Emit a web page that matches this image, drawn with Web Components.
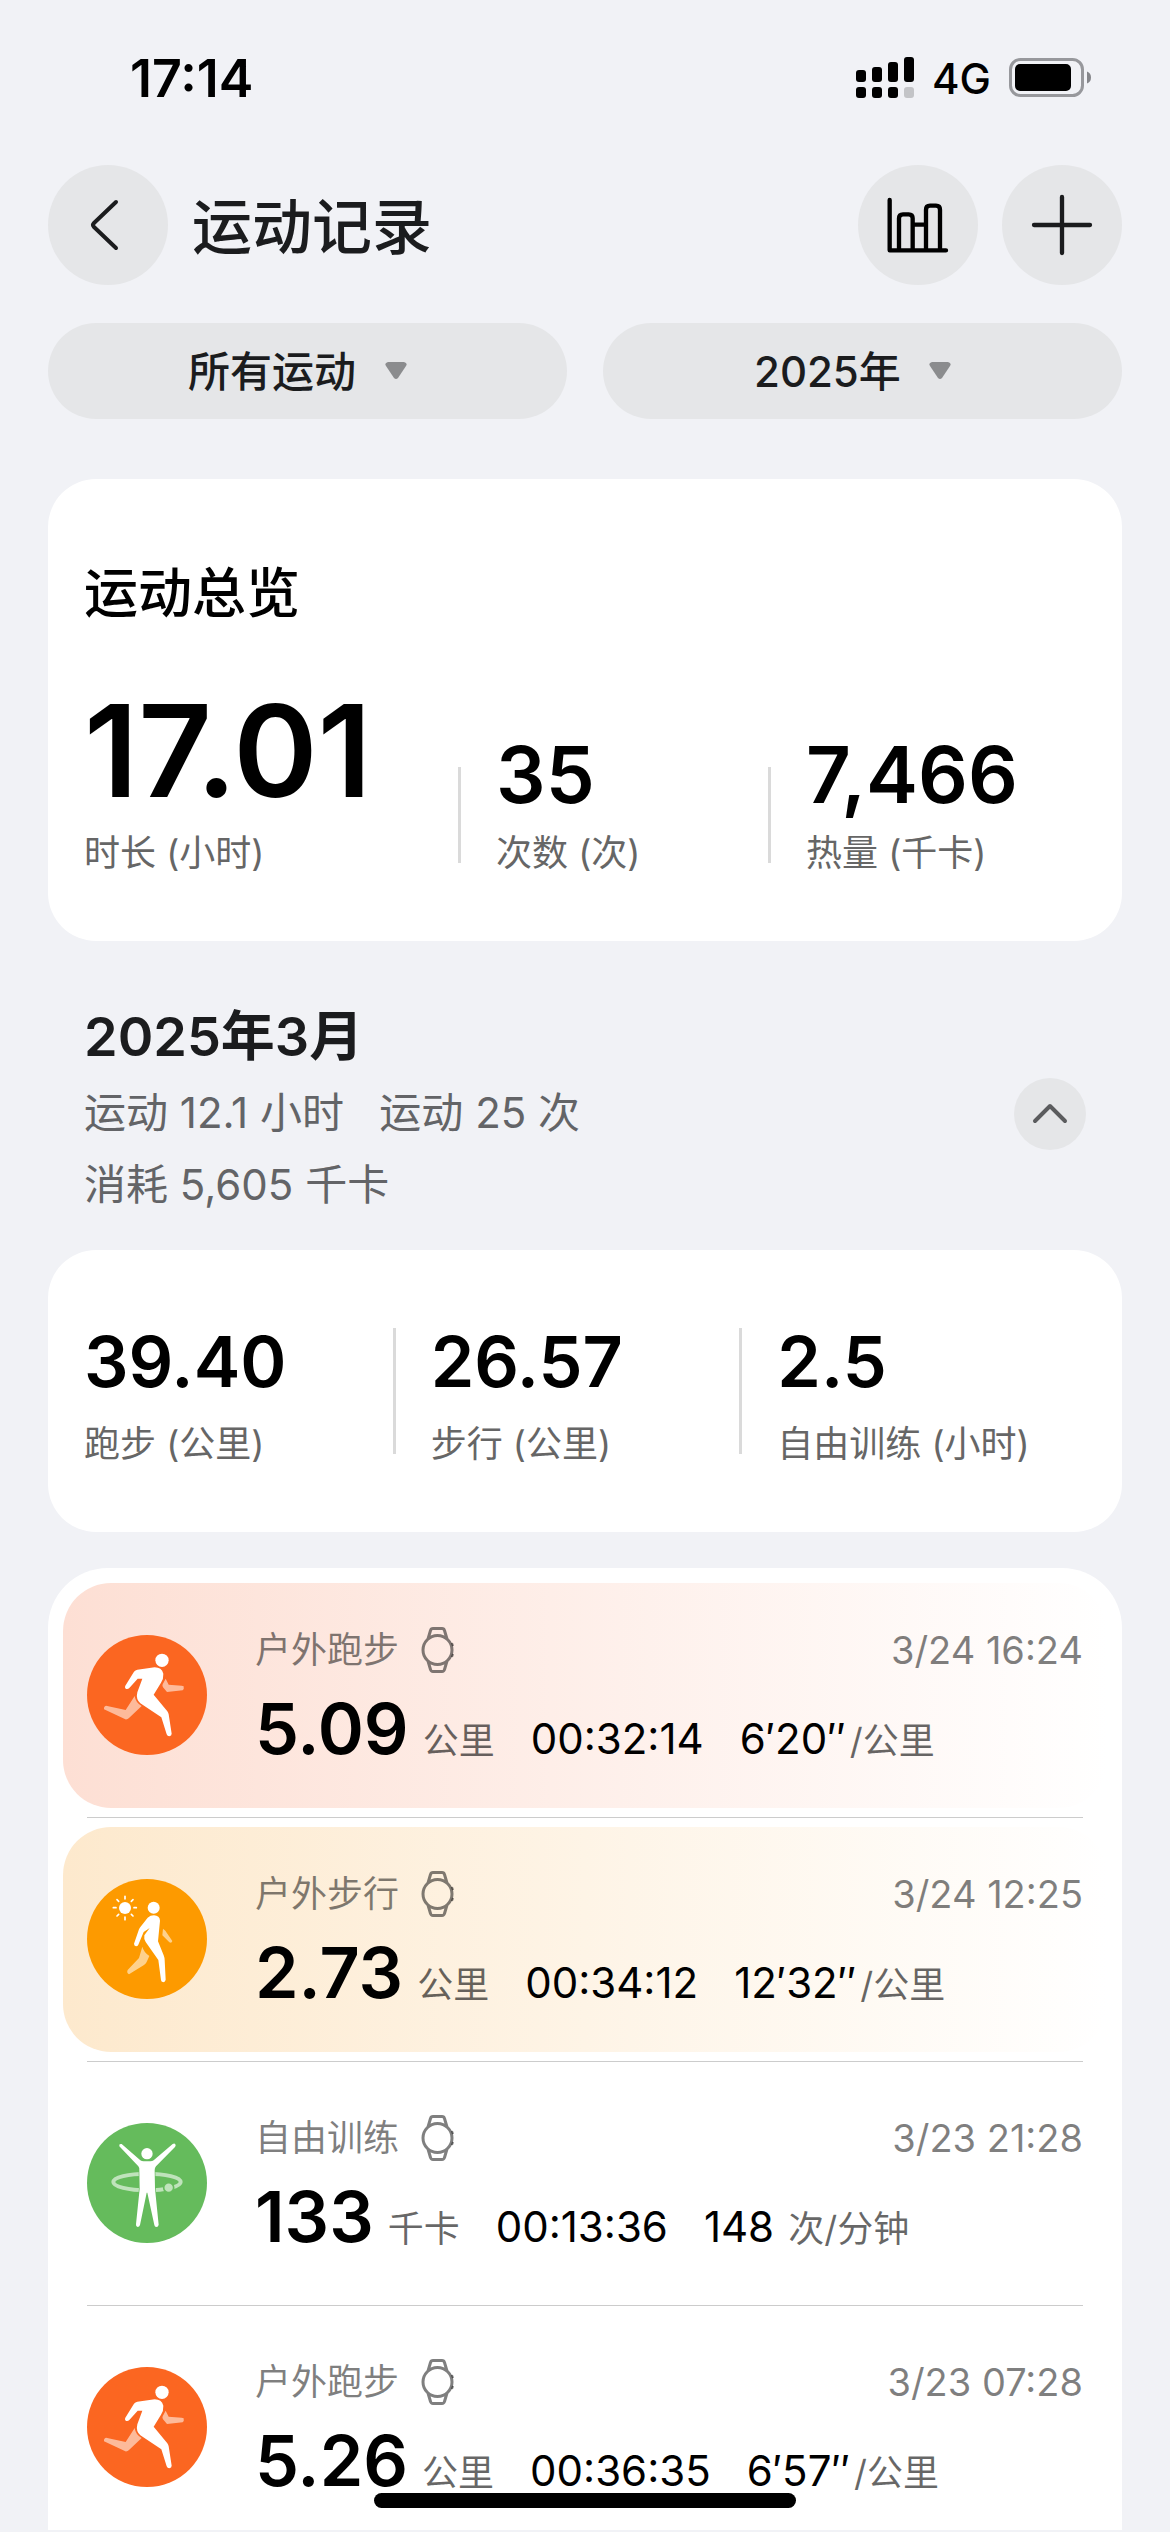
<!DOCTYPE html>
<html lang="zh-CN">
<head>
<meta charset="utf-8">
<meta name="viewport" content="width=device-width, initial-scale=1">
<title>运动记录</title>
<style>
    body {
        margin: 0;
        height: 100vh;
        overflow: hidden;
        background: #f1f2f6;
        color: #000;
        font-family: Inter, "Noto Sans CJK SC", sans-serif;
        font-size: 36px;
    }
</style>
</head>
<body>

<template id="tpl-app-screen">
    <style>
        :host {
            display: flex;
            flex-direction: column;
            height: 100%;
            padding-bottom: 2px;
        }

        main {
            flex: 1;
            min-height: 0;
            overflow: hidden;
            padding: 0 48px;
        }
    </style>
    <slot name="top"></slot>
    <main><slot></slot></main>
    <slot name="bottom"></slot>
</template>

<template id="tpl-status-bar">
    <style>
        :host {
            display: flex;
            align-items: center;
            justify-content: space-between;
            flex: none;
            height: 156px;
            padding: 0 79px 0 130px;
        }

        .time {
            font-size: 52px;
            font-weight: 600;
        }

        .right {
            display: flex;
            align-items: center;
            gap: 18px;
            font-size: 42px;
            font-weight: 500;
        }

        svg {
            display: block;
        }
    </style>
    <span class="time"><slot></slot></span>
    <div class="right">
        <svg width="58" height="42" viewBox="0 0 58 42" aria-hidden="true">
            <rect x="0" y="13" width="10" height="12" rx="3"/>
            <rect x="16" y="10" width="10" height="15" rx="3"/>
            <rect x="32" y="5" width="10" height="20" rx="3"/>
            <rect x="48" y="0" width="10" height="25" rx="3"/>
            <rect x="0" y="30" width="10" height="11" rx="3"/>
            <rect x="16" y="30" width="10" height="11" rx="3"/>
            <rect x="32" y="30" width="10" height="11" rx="3"/>
            <rect x="48" y="30" width="10" height="11" rx="3" fill="#c3c4c7"/>
        </svg>
        <slot name="network"></slot>
        <svg width="82" height="40" viewBox="0 0 82 40" aria-hidden="true">
            <rect x="1.5" y="1.5" width="72" height="36" rx="10" fill="none" stroke="#97989c" stroke-width="3"/>
            <rect x="6" y="6" width="56" height="27" rx="5"/>
            <path d="M78 13.500Q82 15 82 19.500T78 25.500Z" fill="#85868a"/>
        </svg>
    </div>
</template>

<template id="tpl-round-button">
    <style>
        :host {
            display: block;
            --size: 120px;
        }

        button {
            display: block;
            width: var(--size);
            height: var(--size);
            padding: 0;
            border: 0;
            border-radius: 50%;
            background: #e5e6e8;
            color: inherit;
        }

        ::slotted(svg) {
            display: block;
            width: 100%;
            height: 100%;
        }
    </style>
    <button type="button"><slot></slot></button>
</template>

<template id="tpl-page-header">
    <style>
        :host {
            display: flex;
            align-items: center;
            flex: none;
            gap: 24px;
            padding: 9px 48px 0;
            color: #1b1c1e;
        }

        h1 {
            flex: 1;
            margin: 0;
            padding-top: 3px;
            font-size: 60px;
            font-weight: 500;
            line-height: 72px;
        }
    </style>
    <slot name="back"></slot>
    <h1><slot></slot></h1>
    <slot name="actions"></slot>
</template>

<template id="tpl-filter-pill">
    <style>
        :host {
            display: block;
            flex: 1;
        }

        label {
            display: flex;
            align-items: center;
            justify-content: center;
            gap: 28px;
            height: 96px;
            padding-right: 20px;
            border-radius: 48px;
            background: #e5e6e8;
        }

        select {
            appearance: none;
            padding: 0;
            border: 0;
            background: none;
            color: #1b1c1e;
            font: inherit;
            font-size: 42px;
            font-weight: 500;
        }
    </style>
    <label>
        <select></select>
        <svg width="22" height="18" viewBox="0 0 22 18" aria-hidden="true">
            <path d="M3 0H19Q23 1 21 4L13 16Q11 18 9 16L1 4Q-1 1 3 0Z" fill="#8b8c8e"/>
        </svg>
    </label>
</template>

<template id="tpl-filter-bar">
    <style>
        :host {
            display: flex;
            flex: none;
            gap: 36px;
            padding: 38px 48px 60px;
        }
    </style>
    <slot></slot>
</template>

<template id="tpl-stat-card">
    <style>
        :host {
            display: block;
            padding: 54px 36px 64px;
            border-radius: 48px;
            background: #fff;
        }

        :host([heading]) {
            padding: 79px 44px 64px 36px;
        }

        h2 {
            margin: 0 0 43px;
            font-size: 54px;
            font-weight: 500;
            line-height: 72px;
        }

        :host(:not([heading])) h2 {
            display: none;
        }

        .stats {
            display: flex;
            align-items: flex-end;
        }
    </style>
    <h2></h2>
    <div class="stats"><slot></slot></div>
</template>

<template id="tpl-stat-item">
    <style>
        :host {
            display: flex;
            flex: 1 1 0;
            align-items: flex-end;
            min-width: 0;
            --rule: 126px;
        }

        :host(:not(:first-of-type)) {
            padding-left: 38px;
        }

        :host([size="medium"]),
        :host([size="large"]) {
            flex-grow: 8;
            --rule: 96px;
        }

        :host([size="large"]) {
            flex-grow: 11;
        }

        /* the rule sits in the left padding */
        :host(:not(:first-of-type))::before {
            content: "";
            width: 3px;
            height: var(--rule);
            margin: 0 35px 14px -38px;
            background: #dadada;
        }

        .value {
            font-size: 70px;
            font-weight: 600;
            line-height: 116px;
        }

        :host([size="medium"]) .value {
            font-size: 78px;
            line-height: 108px;
        }

        :host([size="large"]) .value {
            font-size: 128px;
            line-height: 156px;
        }

        .label {
            color: #666;
            line-height: 48px;
            white-space: nowrap;
        }
    </style>
    <div>
        <div class="value"></div>
        <div class="label"></div>
    </div>
</template>

<template id="tpl-month-header">
    <style>
        :host {
            display: flex;
            align-items: center;
            justify-content: space-between;
            margin: 60px 0 24px;
            padding: 0 36px;
            color: #1b1c1e;
        }

        h2 {
            margin: 0 0 4px;
            font-size: 54px;
            font-weight: 600;
            line-height: 72px;
        }

        .summary {
            padding-bottom: 5px;
            color: #636467;
            font-size: 42px;
            line-height: 72px;
        }

        round-button {
            --size: 72px;
        }
    </style>
    <div>
        <h2></h2>
        <div class="summary"><slot></slot></div>
    </div>
    <round-button label="收起">
        <svg viewBox="0 0 72 72" fill="none" stroke="#5b5c5e" stroke-width="4" stroke-linecap="round" stroke-linejoin="round">
            <path d="M21 43L36 28L51 43"/>
        </svg>
    </round-button>
</template>

<template id="tpl-workout-list">
    <style>
        :host {
            display: block;
            margin-top: 36px;
            padding: 15px;
            border-radius: 60px 60px 0 0;
            background: #fff;
        }
    </style>
    <slot></slot>
</template>

<template id="tpl-workout-row">
    <style>
        :host {
            display: block;
        }

        /* hairline between rows */
        :host(:not(:first-of-type))::before {
            content: "";
            display: block;
            height: 1px;
            margin: 9px 24px;
            background: #ccc;
        }

        .row {
            display: flex;
            gap: 48px;
            height: 225px;
            padding: 41px 24px 0;
            border-radius: 48px;
        }

        :host([tint="orange"]) .row {
            background: linear-gradient(90deg, #fddfd4, #fff);
        }

        :host([tint="amber"]) .row {
            background: linear-gradient(90deg, #fde9cd, #fff);
        }

        .icon {
            width: 120px;
            height: 120px;
            margin-top: 11px;
            flex: none;
        }

        .body {
            flex: 1;
            min-width: 0;
        }

        .top {
            display: flex;
            align-items: center;
            height: 51px;
            margin-bottom: 12px;
            color: rgba(0, 0, 0, 0.5);
            line-height: 48px;
        }

        .watch {
            margin-left: 22px;
        }

        .date {
            margin-left: auto;
            font-size: 38px;
        }

        .data {
            display: flex;
            align-items: baseline;
            white-space: pre;
            line-height: 48px;
        }

        .value {
            font-size: 70px;
            font-weight: 600;
            line-height: 84px;
        }

        .unit {
            color: rgba(0, 0, 0, 0.6);
        }

        .value + .unit {
            margin-left: 14px;
        }

        .rate + .unit {
            margin-left: 4px;
        }

        .time,
        .rate {
            margin-left: 36px;
            font-size: 42px;
        }
    </style>
    <div class="row">
        <svg class="icon" viewBox="0 0 360 360" aria-hidden="true"></svg>
        <div class="body">
            <div class="top">
                <span class="name"></span>
                <svg class="watch" width="34" height="46" viewBox="0 0 34 46" fill="none" stroke="currentColor" stroke-linejoin="round" aria-hidden="true">
                    <path stroke-width="3" d="M31 23A14.500 14.500 0 1 1 2 23A14.500 14.500 0 1 1 31 23ZM7 12L9.500 3.500Q10 1.500 12 1.500H21Q23 1.500 23.500 3.500L26 12M7 34L9.500 42.500Q10 44.500 12 44.500H21Q23 44.500 23.500 42.500L26 34"/>
                    <path stroke-width="2" d="M31 16L32 19M32 27L31 30"/>
                </svg>
                <span class="date"></span>
            </div>
            <div class="data">
                <span class="value"></span>
                <span class="unit main-unit"></span>
                <span class="time"></span>
                <span class="rate"></span>
                <span class="unit rate-unit"></span>
            </div>
        </div>
    </div>
</template>

<template id="tpl-home-indicator">
    <style>
        :host {
            position: fixed;
            left: 50%;
            bottom: 24px;
            width: 36%;
            height: 15px;
            margin-left: -18%;
            border-radius: 8px;
            background: #000;
        }
    </style>
</template>

<script>
    const ICONS = {
        run: `
            <circle cx="180" cy="180" r="180" fill="#fb6621"/>
            <g fill="#fff" transform="translate(0 -3)">
                <circle cx="225" cy="79" r="20"/>
                <path d="M115 155L141 113Q145 108 151 107L203 100Q224 100 229 119Q230 134 222 146L200 182L241 232Q244 236 245 241L254 299Q254 306 247 307Q241 307 239 301L223 250L160 208Q146 196 151 175L166 134L152 134L127 162Q122 167 116 164Q112 160 115 155Z"/>
                <path opacity=".55" d="M236 134L227 151Q225 156 228 160L240 174L287 169Q292 166 290 157Q288 155 284 155L245 152ZM143 186L116 228L57 215Q50 217 51 226L115 256Q121 257 126 252L164 216Q146 206 143 186Z"/>
            </g>`,
        walk: `
            <circle cx="180" cy="180" r="180" fill="#fd9a00"/>
            <g fill="#fff" transform="translate(0 -3)">
                <circle cx="114" cy="90" r="18"/>
                <path fill="none" stroke="#fff" stroke-width="5" stroke-linecap="round" d="M114 55V63M114 117V125M79 89H87M141 89H148M90 65L95 70M133 109L138 114M138 65L133 70M95 109L90 114"/>
                <circle cx="200" cy="89" r="18"/>
                <path d="M182 119Q190 112 201 112Q218 113 219 128L213 190L230 232Q233 240 233 246L236 305Q235 312 229 313Q222 312 222 306L214 246L176 192Q170 183 172 172L188 150L170 162L154 200Q152 205 147 205Q141 204 141 197L156 154Q158 149 162 145Z"/>
                <path opacity=".55" d="M228 152L226 172L247 193Q254 197 256 189L235 158ZM166 206L156 240L122 276Q118 284 126 289L171 261Q178 256 180 250L187 234Q170 222 166 206Z"/>
            </g>`,
        free: `
            <circle cx="180" cy="180" r="180" fill="#65bb5c"/>
            <g fill="#fff" transform="translate(0 -3)">
                <ellipse cx="180" cy="180" rx="101" ry="25" fill="none" stroke="#bfe3bb" stroke-width="12"/>
                <circle cx="245" cy="197" r="15" fill="#bfe3bb" stroke="#65bb5c" stroke-width="5"/>
                <circle cx="180" cy="95" r="17"/>
                <path stroke="#65bb5c" stroke-width="4" paint-order="stroke" d="M97 73Q95 64 104 66L160 115Q164 118 170 118H190Q196 118 200 115L257 66Q265 62 266 70Q266 72 264 75L207 133Q203 138 203 145L204 200L215 308Q214 315 208 315Q203 315 202 309L181 212H179L159 309Q157 315 152 315Q146 314 147 307L158 200L157 145Q158 138 154 133Z"/>
            </g>`
    };

    class BaseElement extends HTMLElement {
        constructor() {
            super();
            this.attachShadow({ mode: 'open' });
            const tpl = document.querySelector('#tpl-' + this.localName);
            this.shadowRoot.innerHTML = '<style>:host, * { box-sizing: border-box; }</style>';
            this.shadowRoot.appendChild(tpl.content.cloneNode(true));
        }

        $(selector) {
            return this.shadowRoot.querySelector(selector);
        }

        fill(selector, attribute) {
            this.$(selector).textContent = this.getAttribute(attribute) || '';
        }
    }

    class RoundButton extends BaseElement {
        connectedCallback() {
            this.$('button').setAttribute('aria-label', this.getAttribute('label'));
        }
    }

    class FilterPill extends BaseElement {
        connectedCallback() {
            const select = this.$('select');
            select.replaceChildren(new Option(this.getAttribute('value')));
            select.setAttribute('aria-label', this.getAttribute('label'));
        }
    }

    class StatCard extends BaseElement {
        connectedCallback() {
            this.fill('h2', 'heading');
        }
    }

    class StatItem extends BaseElement {
        connectedCallback() {
            this.fill('.value', 'value');
            this.fill('.label', 'label');
        }
    }

    class MonthHeader extends BaseElement {
        connectedCallback() {
            this.fill('h2', 'month');
        }
    }

    class WorkoutRow extends BaseElement {
        connectedCallback() {
            this.$('.icon').innerHTML = ICONS[this.getAttribute('kind')];
            this.fill('.name', 'name');
            this.fill('.date', 'date');
            this.fill('.value', 'value');
            this.fill('.main-unit', 'unit');
            this.fill('.time', 'time');
            this.fill('.rate', 'rate');
            this.fill('.rate-unit', 'rate-unit');
        }
    }

    customElements.define('app-screen', class extends BaseElement {});
    customElements.define('status-bar', class extends BaseElement {});
    customElements.define('page-header', class extends BaseElement {});
    customElements.define('filter-bar', class extends BaseElement {});
    customElements.define('workout-list', class extends BaseElement {});
    customElements.define('home-indicator', class extends BaseElement {});
    customElements.define('round-button', RoundButton);
    customElements.define('filter-pill', FilterPill);
    customElements.define('stat-card', StatCard);
    customElements.define('stat-item', StatItem);
    customElements.define('month-header', MonthHeader);
    customElements.define('workout-row', WorkoutRow);
</script>

<app-screen>
    <status-bar slot="top">17:14<span slot="network">4G</span></status-bar>
    <page-header slot="top">
        <round-button slot="back" label="返回">
            <svg viewBox="0 0 120 120" fill="none" stroke="#1b1c1e" stroke-width="4" stroke-linecap="round" stroke-linejoin="round">
                <path d="M68 37L46 58Q44 60 46 62L68 83"/>
            </svg>
        </round-button>
        运动记录
        <round-button slot="actions" label="统计">
            <svg viewBox="0 0 360 360" fill="none" stroke="#000" stroke-width="13" stroke-linecap="round" stroke-linejoin="round">
                <path d="M95 105V256H264M123 256V160Q123 148 135 148H152Q164 148 164 160V256M204 256V134Q204 122 216 122H234Q246 122 246 134V256M164 179H204"/>
            </svg>
        </round-button>
        <round-button slot="actions" label="添加">
            <svg viewBox="0 0 360 360" fill="none" stroke="#1b1c1e" stroke-width="13" stroke-linecap="round">
                <path d="M180 96V264M96 180H264"/>
            </svg>
        </round-button>
    </page-header>
    <filter-bar slot="top">
        <filter-pill label="运动类型" value="所有运动"></filter-pill>
        <filter-pill label="年份" value="2025年"></filter-pill>
    </filter-bar>

    <stat-card heading="运动总览">
        <stat-item size="large" value="17.01" label="时长 (小时)"></stat-item>
        <stat-item size="medium" value="35" label="次数 (次)"></stat-item>
        <stat-item size="medium" value="7,466" label="热量 (千卡)"></stat-item>
    </stat-card>

    <month-header month="2025年3月">运动 12.1 小时 &nbsp; 运动 25 次<br>消耗 5,605 千卡</month-header>

    <stat-card>
        <stat-item value="39.40" label="跑步 (公里)"></stat-item>
        <stat-item value="26.57" label="步行 (公里)"></stat-item>
        <stat-item value="2.5" label="自由训练 (小时)"></stat-item>
    </stat-card>

    <workout-list>
        <workout-row kind="run" tint="orange" name="户外跑步" date="3/24 16:24" value="5.09" unit="公里" time="00:32:14" rate="6′20″" rate-unit="/公里"></workout-row>
        <workout-row kind="walk" tint="amber" name="户外步行" date="3/24 12:25" value="2.73" unit="公里" time="00:34:12" rate="12′32″" rate-unit="/公里"></workout-row>
        <workout-row kind="free" name="自由训练" date="3/23 21:28" value="133" unit="千卡" time="00:13:36" rate="148" rate-unit=" 次/分钟"></workout-row>
        <workout-row kind="run" name="户外跑步" date="3/23 07:28" value="5.26" unit="公里" time="00:36:35" rate="6′57″" rate-unit="/公里"></workout-row>
    </workout-list>

    <home-indicator slot="bottom"></home-indicator>
</app-screen>

</body>
</html>
